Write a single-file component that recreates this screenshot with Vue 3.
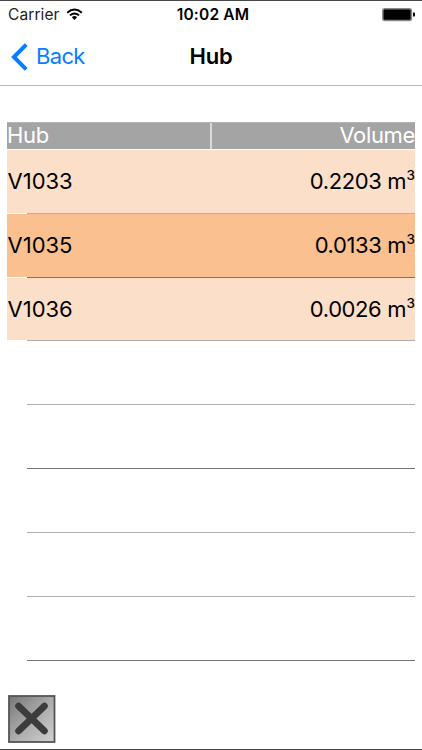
<script setup>
const rows = [
  { hub: 'V1033', volume: '0.2203', tone: 'light', line: 'soft' },
  { hub: 'V1035', volume: '0.0133', tone: 'dark', line: 'strong' },
  { hub: 'V1036', volume: '0.0026', tone: 'light', line: 'soft' },
  { hub: '', volume: '', tone: '', line: 'soft' },
  { hub: '', volume: '', tone: '', line: 'strong' },
  { hub: '', volume: '', tone: '', line: 'soft' },
  { hub: '', volume: '', tone: '', line: 'soft' },
  { hub: '', volume: '', tone: '', line: 'strong' },
]
</script>

<template>
  <div class="screen">
    <header class="status">
      <div class="carrier">
        <span class="carrier-name">Carrier</span>
        <svg class="wifi" width="17" height="13" viewBox="0 0 17 13">
          <path d="M1.2 4.7Q8.5-1.7 15.8 4.7M3.9 7.4Q8.5 3.4 13.1 7.4" fill="none" stroke="#000" stroke-width="1.9" />
          <path d="M5.8 9.2Q8.5 7 11.2 9.2L8.5 12z" />
        </svg>
      </div>
      <span class="time">10:02 AM</span>
      <svg class="battery" width="34" height="14" viewBox="0 0 34 14">
        <rect x="0.8" y="0.8" width="28.6" height="11.6" rx="2" fill="#000" stroke="#8a8a8a" stroke-width="1.5" />
        <path d="M31 4.6h1.2q.8 0 .8.8v2.4q0 .8-.8.8H31z" />
      </svg>
    </header>
    <nav class="nav">
      <a class="back">
        <svg width="17" height="28" viewBox="0 0 17 28">
          <path d="M15.2 1.6L2.9 14L15.2 26.4" fill="none" stroke="#087dff" stroke-width="4" />
        </svg>
        <span class="back-label">Back</span>
      </a>
      <h1 class="title">Hub</h1>
      <span></span>
    </nav>
    <main class="table">
      <div class="head">
        <span class="th">Hub</span>
        <span class="th end">Volume</span>
      </div>
      <div v-for="(row, i) in rows" :key="i" class="row" :class="row.tone">
        <div class="cells">
          <span class="hub">{{ row.hub }}</span>
          <span v-if="row.volume" class="volume">{{ row.volume }} m<sup class="cubed">3</sup></span>
        </div>
        <div class="line" :class="row.line"></div>
      </div>
    </main>
    <footer class="footer">
      <button class="close" aria-label="Close">
        <svg width="48" height="48" viewBox="0 0 48 48">
          <defs>
            <linearGradient id="metal" x1="0" y1="0" x2="1" y2="1">
              <stop offset="0" stop-color="#777" />
              <stop offset="0.5" stop-color="#aaa" />
              <stop offset="1" stop-color="#d2d2d2" />
            </linearGradient>
          </defs>
          <rect x="1" y="1" width="45.5" height="46" fill="url(#metal)" stroke="#555" stroke-width="1.8" />
          <path d="M10.5 11L36.5 36M36.5 11L10.5 36" stroke="#3c3c3c" stroke-width="6.6" stroke-linecap="round" />
        </svg>
      </button>
    </footer>
  </div>
</template>

<style>
body {
  margin: 0;
  background: #fff;
}
</style>

<style scoped>
.screen {
  box-sizing: border-box;
  width: 422px;
  height: 750px;
  display: flex;
  flex-direction: column;
  border-top: 1px solid #48484a;
  border-bottom: 1px solid #48484a;
  background: #fff;
  color: #000;
  font-family: Inter, "Liberation Sans", sans-serif;
  overflow: hidden;
}
.status {
  height: 27px;
  display: grid;
  grid-template-columns: 1fr auto 1fr;
  align-items: center;
  padding: 0 6px 0 8px;
  font-size: 15.5px;
  line-height: 27px;
}
.carrier {
  display: flex;
  align-items: center;
  gap: 6px;
}
.carrier-name {
  color: #222;
  letter-spacing: 0.1px;
}
.time {
  padding-left: 2px;
  font-weight: 600;
  letter-spacing: 0.2px;
}
.battery {
  justify-self: end;
}
.nav {
  box-sizing: border-box;
  height: 58px;
  display: grid;
  grid-template-columns: 1fr auto 1fr;
  align-items: center;
  padding: 0 11px;
  border-bottom: 1px solid #bababa;
}
.back {
  display: flex;
  align-items: center;
  gap: 8px;
  color: #087dff;
  font-size: 22px;
}
.back-label {
  padding-bottom: 1px;
  letter-spacing: -0.65px;
}
.title {
  margin: 0;
  padding-bottom: 1px;
  font-size: 22px;
  font-weight: 600;
  letter-spacing: -0.2px;
}
.table {
  margin: 36px 7px 0;
  font-size: 22px;
}
.head {
  box-sizing: border-box;
  height: 27px;
  display: grid;
  grid-template-columns: 203px 1fr;
  column-gap: 2px;
  border-top: 1px solid #b3b3b3;
  background: #dadada;
}
.th {
  background: #a4a4a4;
  color: #fff;
  line-height: 25px;
  letter-spacing: -0.35px;
}
.end {
  text-align: right;
}
.row {
  height: 63.86px;
  display: flex;
  flex-direction: column;
}
.head + .row {
  margin-top: 0.82px;
}
.cells {
  flex: 1;
  display: flex;
  justify-content: space-between;
  align-items: center;
}
.hub {
  padding-left: 0.5px;
}
.volume {
  letter-spacing: -0.4px;
  line-height: 26px;
}
.cubed {
  margin-left: 0.5px;
  font-size: 13.5px;
  font-weight: 500;
  line-height: 0;
  letter-spacing: 0;
  vertical-align: 9px;
}
.light .cells {
  background: #fcdfc8;
}
.dark .cells {
  background: #fac090;
}
.line {
  height: 1px;
  margin-left: 20px;
}
.soft {
  background: #b2b0ae;
}
.strong {
  background: #777475;
}
.footer {
  margin-top: auto;
  padding: 0 0 6px 8px;
  display: flex;
}
.close {
  display: flex;
  padding: 0;
  border: 0;
  background: none;
}
</style>
